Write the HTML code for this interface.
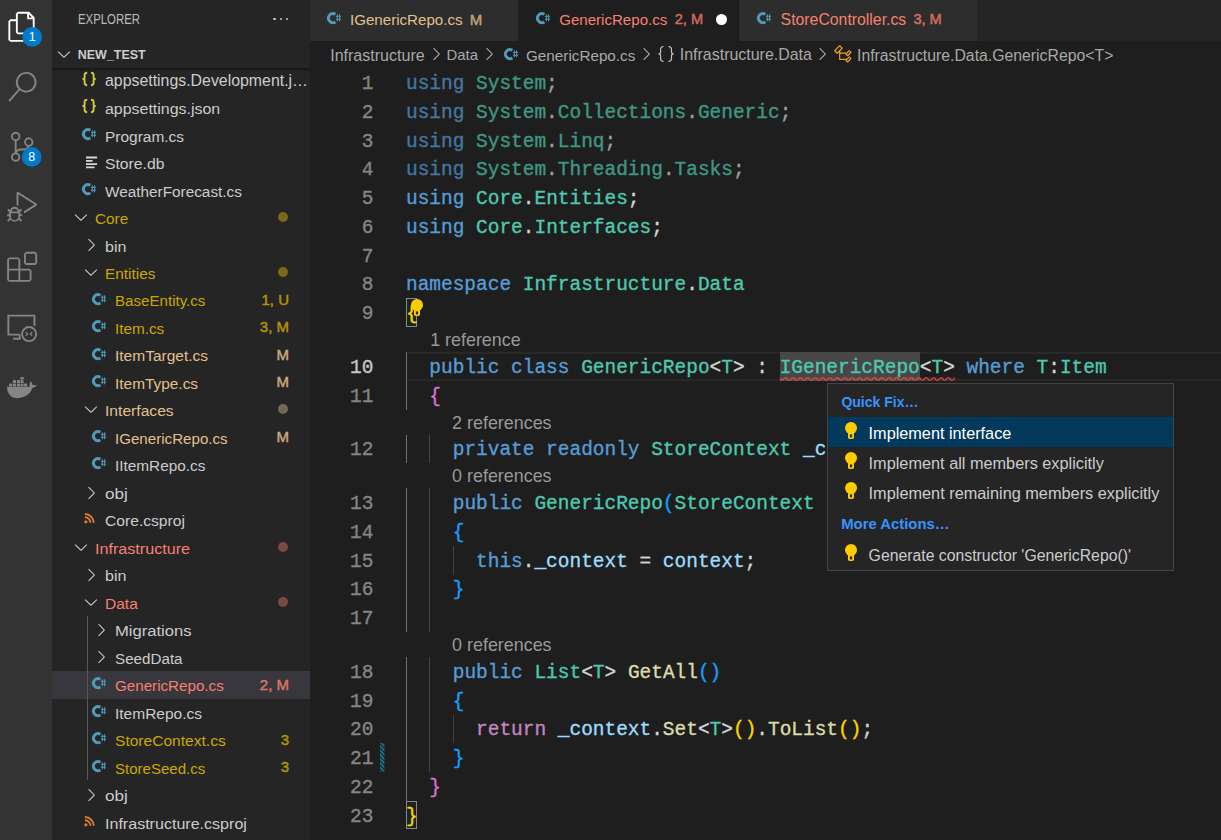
<!DOCTYPE html><html><head><meta charset="utf-8"><style>
html,body{margin:0;padding:0}
body{width:1221px;height:840px;overflow:hidden;position:relative;background:#1e1e1e;font-family:"Liberation Sans",sans-serif}
.t{position:absolute;white-space:pre;line-height:1;font-family:"Liberation Sans",sans-serif}
.c{position:absolute;white-space:pre;line-height:1;font-family:"Liberation Mono",monospace;font-size:19.47px;color:#d4d4d4;-webkit-text-stroke:0.35px currentColor}
svg{overflow:visible}
</style></head><body>
<div style="position:absolute;left:0.00px;top:0.00px;width:52.00px;height:840.00px;background:#333333;"></div>
<div style="position:absolute;left:52.00px;top:0.00px;width:258.00px;height:840.00px;background:#252526;"></div>
<div style="position:absolute;left:310.00px;top:0.00px;width:911.00px;height:41.00px;background:#252526;"></div>
<svg style="position:absolute;left:0;top:0" width="52" height="840"><path transform="translate(7.15,11.8) scale(1.25)" d="M17.5 0h-9L7 1.5V6H2.5L1 7.5v15.07L2.5 24h12.07L16 22.57V18h4.7l1.3-1.43V4.5L17.5 0zm0 2.12l2.38 2.38H17.5V2.12zm-3 20.38h-12v-15H7v9.07L8.5 18h6v4.5zm6-6h-12v-15H16V6h4.5v10.5z" fill="#ffffff"/></svg>
<svg style="position:absolute;left:0;top:0" width="52" height="840"><path transform="translate(7.15,71.9) scale(1.25)" d="M15.25 0a8.25 8.25 0 0 0-6.18 13.72L1 22.88l1.12 1 8.05-9.12A8.251 8.251 0 1 0 15.25.01V0zm0 15a6.75 6.75 0 1 1 0-13.5 6.75 6.75 0 0 1 0 13.5z" fill="#858585"/></svg>
<svg style="position:absolute;left:0;top:0" width="52" height="840"><path transform="translate(7.15,131.8) scale(1.25)" d="M21.007 8.222A3.738 3.738 0 0 0 15.045 5.2a3.737 3.737 0 0 0 1.156 6.583 2.988 2.988 0 0 1-2.668 1.67h-2.99a4.456 4.456 0 0 0-2.989 1.165V7.4a3.737 3.737 0 1 0-1.494 0v9.117a3.776 3.776 0 1 0 1.816.099 2.99 2.99 0 0 1 2.668-1.667h2.99a4.484 4.484 0 0 0 4.223-3.039 3.736 3.736 0 0 0 3.25-3.687zM4.565 3.738a2.242 2.242 0 1 1 4.484 0 2.242 2.242 0 0 1-4.484 0zm4.484 16.441a2.242 2.242 0 1 1-4.484 0 2.242 2.242 0 0 1 4.484 0zm8.221-9.715a2.242 2.242 0 1 1 0-4.485 2.242 2.242 0 0 1 0 4.485z" fill="#858585"/></svg>
<svg style="position:absolute;left:0;top:0" width="52" height="840"><path transform="translate(7.15,191.8) scale(1.25)" d="M10.94 13.5l-1.32 1.32a3.73 3.73 0 0 0-7.24 0L1.06 13.5 0 14.56l1.72 1.72-.22.22V18H0v1.5h1.5v.08c.077.489.214.966.41 1.42L0 22.94 1.06 24l1.65-1.64a4.308 4.308 0 0 0 6.58 0L10.94 24 12 22.94 10.09 21c.198-.464.336-.951.41-1.45v-.1H12V18h-1.5v-1.5l-.22-.22L12 14.56l-1.06-1.06zM6 13.5a2.25 2.25 0 0 1 2.25 2.25h-4.5A2.25 2.25 0 0 1 6 13.5zm3 6a3.33 3.33 0 0 1-3 3.25A3.33 3.33 0 0 1 3 19.5v-2.25h6v2.25zm14.76-9.9v1.26L13.5 17.37V15.6l8.5-5.37L9 2v9.46a5.07 5.07 0 0 0-1.5-.72V.63L8.64 0l15.12 9.6z" fill="#858585"/></svg>
<svg style="position:absolute;left:0;top:0" width="52" height="840"><path transform="translate(7.15,251.8) scale(1.25)" d="M13.5 1.5L15 0h7.5L24 1.5V9l-1.5 1.5H15L13.5 9V1.5zm1.5 0V9h7.5V1.5H15zM0 15V6l1.5-1.5H9L10.5 6v7.5H18l1.5 1.5v7.5L18 24H1.5L0 22.5V15zm9-1.5V6H1.5v7.5H9zM9 15H1.5v7.5H9V15zm1.5 7.5H18V15h-7.5v7.5z" fill="#858585"/></svg>
<svg style="position:absolute;left:0px;top:0px;" width="52" height="200" viewBox="0 0 52 200"><circle cx="32.2" cy="36.9" r="9.9" fill="#007acc"/><circle cx="31.7" cy="156.9" r="9.9" fill="#007acc"/></svg>
<div class="t" style="left:28.72px;top:30.82px;font-size:12.50px;color:#ffffff;">1</div>
<div class="t" style="left:28.22px;top:150.82px;font-size:12.50px;color:#ffffff;">8</div>
<svg style="position:absolute;left:0px;top:300px;" width="52" height="52" viewBox="0 0 52 52"><g fill="none" stroke="#858585" stroke-width="1.9"><path d="M19.7,34.6 H8.35 V15.65 H34.45 V26.1"/><path d="M13.1,38.7 H19.7 V34.6"/><circle cx="29.1" cy="34.1" r="7.05"/><path d="M25.8,32.2 L27.6,34 L25.8,35.8 M32.2,32.2 L30.4,34 L32.2,35.8" stroke-width="1.3"/></g></svg>
<svg style="position:absolute;left:0px;top:360px;" width="52" height="52" viewBox="0 0 52 52"><g fill="#858585"><path d="M6.9,26.7 H29.5 Q29.2,23 30.5,21 Q32.3,23.2 32.6,25 Q35,24.7 36.9,25.6 Q35.5,27.6 32.3,27.9 Q30.5,34 24,36.8 Q19,38.6 15,38 Q7.3,36.5 6.9,26.7 Z"/><rect x="9.1" y="23.6" width="3.1" height="2.8"/><rect x="12.9" y="23.6" width="3.1" height="2.8"/><rect x="16.9" y="23.6" width="3.1" height="2.8"/><rect x="20.6" y="23.6" width="2.9" height="2.8"/><rect x="24" y="23.6" width="3.1" height="2.8"/><rect x="12.9" y="20.1" width="3.1" height="2.9"/><rect x="16.9" y="20.1" width="3.1" height="2.9"/><rect x="20.6" y="20.1" width="2.9" height="2.9"/><rect x="20.4" y="17" width="3.2" height="2.6"/></g></svg>
<div class="t" style="left:77.50px;top:12.16px;font-size:14.10px;color:#bbbbbb;transform:scaleX(0.807);transform-origin:0 0;">EXPLORER</div>
<div style="position:absolute;left:273.20px;top:17.80px;width:2.60px;height:2.60px;background:#c5c5c5;border-radius:50%;"></div>
<div style="position:absolute;left:279.50px;top:17.80px;width:2.60px;height:2.60px;background:#c5c5c5;border-radius:50%;"></div>
<div style="position:absolute;left:285.80px;top:17.80px;width:2.60px;height:2.60px;background:#c5c5c5;border-radius:50%;"></div>
<svg style="position:absolute;left:54.25px;top:43.90px" width="20" height="20" viewBox="0 0 16 16"><path d="M7.976 10.072l4.357-4.357.62.618L8.284 11h-.618L3 6.333l.619-.618 4.357 4.357z" fill="#c5c5c5"/></svg>
<div class="t" style="left:77.70px;top:48.93px;font-size:12.49px;color:#cccccc;font-weight:700;">NEW_TEST</div>
<div style="position:absolute;left:52.00px;top:670.96px;width:258.00px;height:27.60px;background:#37373d;"></div>
<div style="position:absolute;left:86.60px;top:615.70px;width:1.00px;height:164.30px;background:#585858;"></div>
<svg style="position:absolute;left:82px;top:72.0px;" width="16" height="16" viewBox="0 0 16 16"><g fill="none" stroke="#cbcb41" stroke-width="1.9"><path d="M5.2,0.8 Q2.6,0.8 2.6,3.2 V5.8 Q2.6,7 0.5,7 Q2.6,7 2.6,8.2 V10.8 Q2.6,13.2 5.2,13.2"/><path d="M9,0.8 Q11.6,0.8 11.6,3.2 V5.8 Q11.6,7 13.7,7 Q11.6,7 11.6,8.2 V10.8 Q11.6,13.2 9,13.2"/></g></svg>
<div class="t" style="left:105.00px;top:73.26px;font-size:15.88px;color:#cccccc;">appsettings.Development.j…</div>
<svg style="position:absolute;left:82px;top:99.48px;" width="16" height="16" viewBox="0 0 16 16"><g fill="none" stroke="#cbcb41" stroke-width="1.9"><path d="M5.2,0.8 Q2.6,0.8 2.6,3.2 V5.8 Q2.6,7 0.5,7 Q2.6,7 2.6,8.2 V10.8 Q2.6,13.2 5.2,13.2"/><path d="M9,0.8 Q11.6,0.8 11.6,3.2 V5.8 Q11.6,7 13.7,7 Q11.6,7 11.6,8.2 V10.8 Q11.6,13.2 9,13.2"/></g></svg>
<div class="t" style="left:105.00px;top:101.10px;font-size:15.45px;color:#cccccc;transform:scaleX(1.0318);transform-origin:0 0;">appsettings.json</div>
<svg style="position:absolute;left:82.05px;top:127.66px;" width="16" height="14" viewBox="0 0 16 14"><g transform="scale(1.0)"><path d="M8.41,2.24 A4.55,4.55 0 1 0 8.41,9.96" fill="none" stroke="#519aba" stroke-width="2.9"/><path d="M10.3,2.3 V9.3 M12.6,2.3 V9.3 M8.9,4.3 H14.1 M8.9,7.2 H14.1" stroke="#519aba" stroke-width="1.0" fill="none"/></g></svg>
<div class="t" style="left:105.00px;top:128.58px;font-size:15.45px;color:#cccccc;transform:scaleX(1.0015);transform-origin:0 0;">Program.cs</div>
<svg style="position:absolute;left:86px;top:156.58px;" width="12" height="13" viewBox="0 0 12 13"><g stroke="#d4d7d6" stroke-width="1.9"><path d="M0,0.5 H11.1 M0,3.9 H6.6 M0,7.1 H11.1 M0,10.4 H8.6"/></g></svg>
<div class="t" style="left:105.00px;top:156.06px;font-size:15.45px;color:#cccccc;transform:scaleX(1.0188);transform-origin:0 0;">Store.db</div>
<svg style="position:absolute;left:82.05px;top:182.62px;" width="16" height="14" viewBox="0 0 16 14"><g transform="scale(1.0)"><path d="M8.41,2.24 A4.55,4.55 0 1 0 8.41,9.96" fill="none" stroke="#519aba" stroke-width="2.9"/><path d="M10.3,2.3 V9.3 M12.6,2.3 V9.3 M8.9,4.3 H14.1 M8.9,7.2 H14.1" stroke="#519aba" stroke-width="1.0" fill="none"/></g></svg>
<div class="t" style="left:105.00px;top:183.54px;font-size:15.45px;color:#cccccc;transform:scaleX(0.9931);transform-origin:0 0;">WeatherForecast.cs</div>
<svg style="position:absolute;left:70.55px;top:206.90px" width="20" height="20" viewBox="0 0 16 16"><path d="M7.976 10.072l4.357-4.357.62.618L8.284 11h-.618L3 6.333l.619-.618 4.357 4.357z" fill="#c5c5c5"/></svg>
<div class="t" style="left:95.00px;top:211.02px;font-size:15.45px;color:#cca700;transform:scaleX(0.9915);transform-origin:0 0;">Core</div>
<div style="position:absolute;left:278.10px;top:212.04px;width:10.00px;height:10.00px;background:#7a6819;border-radius:50%;"></div>
<svg style="position:absolute;left:80.95px;top:235.18px" width="20" height="20" viewBox="0 0 16 16"><path d="M10.072 8.024L5.715 3.667l.618-.62L11 7.716v.618L6.333 13l-.618-.619 4.357-4.357z" fill="#c5c5c5"/></svg>
<div class="t" style="left:105.00px;top:238.50px;font-size:15.45px;color:#cccccc;transform:scaleX(1.0429);transform-origin:0 0;">bin</div>
<svg style="position:absolute;left:80.55px;top:261.86px" width="20" height="20" viewBox="0 0 16 16"><path d="M7.976 10.072l4.357-4.357.62.618L8.284 11h-.618L3 6.333l.619-.618 4.357 4.357z" fill="#c5c5c5"/></svg>
<div class="t" style="left:105.00px;top:265.98px;font-size:15.45px;color:#cca700;transform:scaleX(0.9968);transform-origin:0 0;">Entities</div>
<div style="position:absolute;left:278.10px;top:267.00px;width:10.00px;height:10.00px;background:#7a6819;border-radius:50%;"></div>
<svg style="position:absolute;left:92.05px;top:292.54px;" width="16" height="14" viewBox="0 0 16 14"><g transform="scale(1.0)"><path d="M8.41,2.24 A4.55,4.55 0 1 0 8.41,9.96" fill="none" stroke="#519aba" stroke-width="2.9"/><path d="M10.3,2.3 V9.3 M12.6,2.3 V9.3 M8.9,4.3 H14.1 M8.9,7.2 H14.1" stroke="#519aba" stroke-width="1.0" fill="none"/></g></svg>
<div class="t" style="left:115.00px;top:293.46px;font-size:15.45px;color:#cca700;transform:scaleX(0.9789);transform-origin:0 0;">BaseEntity.cs</div>
<div class="t" style="left:261.49px;top:291.84px;font-size:15.00px;color:#cca700;opacity:0.85;-webkit-text-stroke:0.45px currentColor;">1, U</div>
<svg style="position:absolute;left:92.05px;top:320.02px;" width="16" height="14" viewBox="0 0 16 14"><g transform="scale(1.0)"><path d="M8.41,2.24 A4.55,4.55 0 1 0 8.41,9.96" fill="none" stroke="#519aba" stroke-width="2.9"/><path d="M10.3,2.3 V9.3 M12.6,2.3 V9.3 M8.9,4.3 H14.1 M8.9,7.2 H14.1" stroke="#519aba" stroke-width="1.0" fill="none"/></g></svg>
<div class="t" style="left:115.00px;top:320.94px;font-size:15.45px;color:#cca700;transform:scaleX(0.9902);transform-origin:0 0;">Item.cs</div>
<div class="t" style="left:259.83px;top:319.32px;font-size:15.00px;color:#cca700;opacity:0.85;-webkit-text-stroke:0.45px currentColor;">3, M</div>
<svg style="position:absolute;left:92.05px;top:347.5px;" width="16" height="14" viewBox="0 0 16 14"><g transform="scale(1.0)"><path d="M8.41,2.24 A4.55,4.55 0 1 0 8.41,9.96" fill="none" stroke="#519aba" stroke-width="2.9"/><path d="M10.3,2.3 V9.3 M12.6,2.3 V9.3 M8.9,4.3 H14.1 M8.9,7.2 H14.1" stroke="#519aba" stroke-width="1.0" fill="none"/></g></svg>
<div class="t" style="left:115.00px;top:348.42px;font-size:15.45px;color:#e2c08d;transform:scaleX(1.0041);transform-origin:0 0;">ItemTarget.cs</div>
<div class="t" style="left:276.51px;top:346.80px;font-size:15.00px;color:#e2c08d;opacity:0.85;-webkit-text-stroke:0.45px currentColor;">M</div>
<svg style="position:absolute;left:92.05px;top:374.98px;" width="16" height="14" viewBox="0 0 16 14"><g transform="scale(1.0)"><path d="M8.41,2.24 A4.55,4.55 0 1 0 8.41,9.96" fill="none" stroke="#519aba" stroke-width="2.9"/><path d="M10.3,2.3 V9.3 M12.6,2.3 V9.3 M8.9,4.3 H14.1 M8.9,7.2 H14.1" stroke="#519aba" stroke-width="1.0" fill="none"/></g></svg>
<div class="t" style="left:115.00px;top:375.90px;font-size:15.45px;color:#e2c08d;transform:scaleX(0.9978);transform-origin:0 0;">ItemType.cs</div>
<div class="t" style="left:276.51px;top:374.28px;font-size:15.00px;color:#e2c08d;opacity:0.85;-webkit-text-stroke:0.45px currentColor;">M</div>
<svg style="position:absolute;left:80.55px;top:399.26px" width="20" height="20" viewBox="0 0 16 16"><path d="M7.976 10.072l4.357-4.357.62.618L8.284 11h-.618L3 6.333l.619-.618 4.357 4.357z" fill="#c5c5c5"/></svg>
<div class="t" style="left:105.00px;top:403.38px;font-size:15.45px;color:#e2c08d;transform:scaleX(1.0127);transform-origin:0 0;">Interfaces</div>
<div style="position:absolute;left:278.10px;top:404.40px;width:10.00px;height:10.00px;background:#756850;border-radius:50%;"></div>
<svg style="position:absolute;left:92.05px;top:429.94px;" width="16" height="14" viewBox="0 0 16 14"><g transform="scale(1.0)"><path d="M8.41,2.24 A4.55,4.55 0 1 0 8.41,9.96" fill="none" stroke="#519aba" stroke-width="2.9"/><path d="M10.3,2.3 V9.3 M12.6,2.3 V9.3 M8.9,4.3 H14.1 M8.9,7.2 H14.1" stroke="#519aba" stroke-width="1.0" fill="none"/></g></svg>
<div class="t" style="left:115.00px;top:430.86px;font-size:15.45px;color:#e2c08d;transform:scaleX(0.9795);transform-origin:0 0;">IGenericRepo.cs</div>
<div class="t" style="left:276.51px;top:429.24px;font-size:15.00px;color:#e2c08d;opacity:0.85;-webkit-text-stroke:0.45px currentColor;">M</div>
<svg style="position:absolute;left:92.05px;top:457.42px;" width="16" height="14" viewBox="0 0 16 14"><g transform="scale(1.0)"><path d="M8.41,2.24 A4.55,4.55 0 1 0 8.41,9.96" fill="none" stroke="#519aba" stroke-width="2.9"/><path d="M10.3,2.3 V9.3 M12.6,2.3 V9.3 M8.9,4.3 H14.1 M8.9,7.2 H14.1" stroke="#519aba" stroke-width="1.0" fill="none"/></g></svg>
<div class="t" style="left:115.00px;top:458.34px;font-size:15.45px;color:#cccccc;transform:scaleX(0.9944);transform-origin:0 0;">IItemRepo.cs</div>
<svg style="position:absolute;left:80.95px;top:482.50px" width="20" height="20" viewBox="0 0 16 16"><path d="M10.072 8.024L5.715 3.667l.618-.62L11 7.716v.618L6.333 13l-.618-.619 4.357-4.357z" fill="#c5c5c5"/></svg>
<div class="t" style="left:105.00px;top:485.82px;font-size:15.45px;color:#cccccc;transform:scaleX(1.1108);transform-origin:0 0;">obj</div>
<svg style="position:absolute;left:83.7px;top:513.48px;" width="12" height="12" viewBox="0 0 12 12"><g fill="none" stroke="#e37933" stroke-width="1.9"><path d="M0.9,4.2 A5.6,5.6 0 0 1 6.5,9.8"/><path d="M0.9,1.0 A8.8,8.8 0 0 1 9.7,9.8"/></g><circle cx="1.9" cy="8.8" r="1.6" fill="#e37933"/></svg>
<div class="t" style="left:105.00px;top:513.30px;font-size:15.45px;color:#cccccc;transform:scaleX(1.0128);transform-origin:0 0;">Core.csproj</div>
<svg style="position:absolute;left:70.55px;top:536.66px" width="20" height="20" viewBox="0 0 16 16"><path d="M7.976 10.072l4.357-4.357.62.618L8.284 11h-.618L3 6.333l.619-.618 4.357 4.357z" fill="#c5c5c5"/></svg>
<div class="t" style="left:95.00px;top:540.78px;font-size:15.45px;color:#f88070;transform:scaleX(1.0449);transform-origin:0 0;">Infrastructure</div>
<div style="position:absolute;left:278.10px;top:541.80px;width:10.00px;height:10.00px;background:#7a4a42;border-radius:50%;"></div>
<svg style="position:absolute;left:80.95px;top:564.94px" width="20" height="20" viewBox="0 0 16 16"><path d="M10.072 8.024L5.715 3.667l.618-.62L11 7.716v.618L6.333 13l-.618-.619 4.357-4.357z" fill="#c5c5c5"/></svg>
<div class="t" style="left:105.00px;top:568.26px;font-size:15.45px;color:#cccccc;transform:scaleX(1.0429);transform-origin:0 0;">bin</div>
<svg style="position:absolute;left:80.55px;top:591.62px" width="20" height="20" viewBox="0 0 16 16"><path d="M7.976 10.072l4.357-4.357.62.618L8.284 11h-.618L3 6.333l.619-.618 4.357 4.357z" fill="#c5c5c5"/></svg>
<div class="t" style="left:105.00px;top:595.74px;font-size:15.45px;color:#f88070;transform:scaleX(1.0051);transform-origin:0 0;">Data</div>
<div style="position:absolute;left:278.10px;top:596.76px;width:10.00px;height:10.00px;background:#7a4a42;border-radius:50%;"></div>
<svg style="position:absolute;left:90.95px;top:619.90px" width="20" height="20" viewBox="0 0 16 16"><path d="M10.072 8.024L5.715 3.667l.618-.62L11 7.716v.618L6.333 13l-.618-.619 4.357-4.357z" fill="#c5c5c5"/></svg>
<div class="t" style="left:115.00px;top:623.22px;font-size:15.45px;color:#cccccc;transform:scaleX(1.0749);transform-origin:0 0;">Migrations</div>
<svg style="position:absolute;left:90.95px;top:647.38px" width="20" height="20" viewBox="0 0 16 16"><path d="M10.072 8.024L5.715 3.667l.618-.62L11 7.716v.618L6.333 13l-.618-.619 4.357-4.357z" fill="#c5c5c5"/></svg>
<div class="t" style="left:115.00px;top:650.70px;font-size:15.45px;color:#cccccc;transform:scaleX(0.9838);transform-origin:0 0;">SeedData</div>
<svg style="position:absolute;left:92.05px;top:677.26px;" width="16" height="14" viewBox="0 0 16 14"><g transform="scale(1.0)"><path d="M8.41,2.24 A4.55,4.55 0 1 0 8.41,9.96" fill="none" stroke="#519aba" stroke-width="2.9"/><path d="M10.3,2.3 V9.3 M12.6,2.3 V9.3 M8.9,4.3 H14.1 M8.9,7.2 H14.1" stroke="#519aba" stroke-width="1.0" fill="none"/></g></svg>
<div class="t" style="left:115.00px;top:678.18px;font-size:15.45px;color:#f88070;transform:scaleX(0.9822);transform-origin:0 0;">GenericRepo.cs</div>
<div class="t" style="left:259.83px;top:676.56px;font-size:15.00px;color:#f88070;opacity:0.85;-webkit-text-stroke:0.45px currentColor;">2, M</div>
<svg style="position:absolute;left:92.05px;top:704.74px;" width="16" height="14" viewBox="0 0 16 14"><g transform="scale(1.0)"><path d="M8.41,2.24 A4.55,4.55 0 1 0 8.41,9.96" fill="none" stroke="#519aba" stroke-width="2.9"/><path d="M10.3,2.3 V9.3 M12.6,2.3 V9.3 M8.9,4.3 H14.1 M8.9,7.2 H14.1" stroke="#519aba" stroke-width="1.0" fill="none"/></g></svg>
<div class="t" style="left:115.00px;top:705.66px;font-size:15.45px;color:#cccccc;transform:scaleX(1.0044);transform-origin:0 0;">ItemRepo.cs</div>
<svg style="position:absolute;left:92.05px;top:732.22px;" width="16" height="14" viewBox="0 0 16 14"><g transform="scale(1.0)"><path d="M8.41,2.24 A4.55,4.55 0 1 0 8.41,9.96" fill="none" stroke="#519aba" stroke-width="2.9"/><path d="M10.3,2.3 V9.3 M12.6,2.3 V9.3 M8.9,4.3 H14.1 M8.9,7.2 H14.1" stroke="#519aba" stroke-width="1.0" fill="none"/></g></svg>
<div class="t" style="left:115.00px;top:733.14px;font-size:15.45px;color:#cca700;transform:scaleX(1.0081);transform-origin:0 0;">StoreContext.cs</div>
<div class="t" style="left:280.66px;top:731.52px;font-size:15.00px;color:#cca700;opacity:0.85;-webkit-text-stroke:0.45px currentColor;">3</div>
<svg style="position:absolute;left:92.05px;top:759.7px;" width="16" height="14" viewBox="0 0 16 14"><g transform="scale(1.0)"><path d="M8.41,2.24 A4.55,4.55 0 1 0 8.41,9.96" fill="none" stroke="#519aba" stroke-width="2.9"/><path d="M10.3,2.3 V9.3 M12.6,2.3 V9.3 M8.9,4.3 H14.1 M8.9,7.2 H14.1" stroke="#519aba" stroke-width="1.0" fill="none"/></g></svg>
<div class="t" style="left:115.00px;top:760.62px;font-size:15.45px;color:#cca700;transform:scaleX(0.9736);transform-origin:0 0;">StoreSeed.cs</div>
<div class="t" style="left:280.66px;top:759.00px;font-size:15.00px;color:#cca700;opacity:0.85;-webkit-text-stroke:0.45px currentColor;">3</div>
<svg style="position:absolute;left:80.95px;top:784.78px" width="20" height="20" viewBox="0 0 16 16"><path d="M10.072 8.024L5.715 3.667l.618-.62L11 7.716v.618L6.333 13l-.618-.619 4.357-4.357z" fill="#c5c5c5"/></svg>
<div class="t" style="left:105.00px;top:788.10px;font-size:15.45px;color:#cccccc;transform:scaleX(1.1108);transform-origin:0 0;">obj</div>
<svg style="position:absolute;left:83.7px;top:815.76px;" width="12" height="12" viewBox="0 0 12 12"><g fill="none" stroke="#e37933" stroke-width="1.9"><path d="M0.9,4.2 A5.6,5.6 0 0 1 6.5,9.8"/><path d="M0.9,1.0 A8.8,8.8 0 0 1 9.7,9.8"/></g><circle cx="1.9" cy="8.8" r="1.6" fill="#e37933"/></svg>
<div class="t" style="left:105.00px;top:815.58px;font-size:15.45px;color:#cccccc;transform:scaleX(1.0402);transform-origin:0 0;">Infrastructure.csproj</div>
<div style="position:absolute;left:52.00px;top:67.60px;width:258.00px;height:4.00px;background:linear-gradient(rgba(0,0,0,0.42),rgba(0,0,0,0));"></div>
<div style="position:absolute;left:310.00px;top:0.00px;width:208.00px;height:41.00px;background:#2d2d2d;"></div>
<div style="position:absolute;left:518.00px;top:0.00px;width:221.00px;height:41.00px;background:#1e1e1e;"></div>
<div style="position:absolute;left:739.00px;top:0.00px;width:238.00px;height:41.00px;background:#2d2d2d;"></div>
<svg style="position:absolute;left:326.9px;top:11.9px;" width="16" height="14" viewBox="0 0 16 14"><g transform="scale(1.0)"><path d="M8.41,2.24 A4.55,4.55 0 1 0 8.41,9.96" fill="none" stroke="#519aba" stroke-width="2.9"/><path d="M10.3,2.3 V9.3 M12.6,2.3 V9.3 M8.9,4.3 H14.1 M8.9,7.2 H14.1" stroke="#519aba" stroke-width="1.0" fill="none"/></g></svg>
<div class="t" style="left:350.00px;top:12.31px;font-size:15.11px;color:#e2c08d;">IGenericRepo.cs</div>
<div class="t" style="left:469.80px;top:11.70px;font-size:15.00px;color:#e2c08d;opacity:0.8;-webkit-text-stroke:0.45px currentColor;">M</div>
<svg style="position:absolute;left:536.1px;top:11.9px;" width="16" height="14" viewBox="0 0 16 14"><g transform="scale(1.0)"><path d="M8.41,2.24 A4.55,4.55 0 1 0 8.41,9.96" fill="none" stroke="#519aba" stroke-width="2.9"/><path d="M10.3,2.3 V9.3 M12.6,2.3 V9.3 M8.9,4.3 H14.1 M8.9,7.2 H14.1" stroke="#519aba" stroke-width="1.0" fill="none"/></g></svg>
<div class="t" style="left:559.20px;top:12.32px;font-size:15.09px;color:#f88070;">GenericRepo.cs</div>
<div class="t" style="left:674.70px;top:12.04px;font-size:14.60px;color:#f88070;opacity:0.8;-webkit-text-stroke:0.45px currentColor;">2, M</div>
<div style="position:absolute;left:716.00px;top:13.80px;width:11.00px;height:11.00px;background:#ffffff;border-radius:50%;"></div>
<svg style="position:absolute;left:756.9px;top:11.9px;" width="16" height="14" viewBox="0 0 16 14"><g transform="scale(1.0)"><path d="M8.41,2.24 A4.55,4.55 0 1 0 8.41,9.96" fill="none" stroke="#519aba" stroke-width="2.9"/><path d="M10.3,2.3 V9.3 M12.6,2.3 V9.3 M8.9,4.3 H14.1 M8.9,7.2 H14.1" stroke="#519aba" stroke-width="1.0" fill="none"/></g></svg>
<div class="t" style="left:780.60px;top:11.71px;font-size:15.82px;color:#f88070;">StoreController.cs</div>
<div class="t" style="left:913.40px;top:12.04px;font-size:14.60px;color:#f88070;opacity:0.8;-webkit-text-stroke:0.45px currentColor;">3, M</div>
<div class="t" style="left:330.20px;top:47.41px;font-size:16.06px;color:#a9a9a9;">Infrastructure</div>
<svg style="position:absolute;left:425.90px;top:44.10px" width="20" height="20" viewBox="0 0 16 16"><path d="M10.072 8.024L5.715 3.667l.618-.62L11 7.716v.618L6.333 13l-.618-.619 4.357-4.357z" fill="#a9a9a9"/></svg>
<div class="t" style="left:446.50px;top:48.38px;font-size:14.91px;color:#a9a9a9;">Data</div>
<svg style="position:absolute;left:479.20px;top:44.10px" width="20" height="20" viewBox="0 0 16 16"><path d="M10.072 8.024L5.715 3.667l.618-.62L11 7.716v.618L6.333 13l-.618-.619 4.357-4.357z" fill="#a9a9a9"/></svg>
<svg style="position:absolute;left:504.2px;top:48.1px;" width="16" height="14" viewBox="0 0 16 14"><g transform="scale(1.0)"><path d="M8.41,2.24 A4.55,4.55 0 1 0 8.41,9.96" fill="none" stroke="#519aba" stroke-width="2.9"/><path d="M10.3,2.3 V9.3 M12.6,2.3 V9.3 M8.9,4.3 H14.1 M8.9,7.2 H14.1" stroke="#519aba" stroke-width="1.0" fill="none"/></g></svg>
<div class="t" style="left:526.00px;top:48.10px;font-size:15.25px;color:#a9a9a9;">GenericRepo.cs</div>
<svg style="position:absolute;left:635.60px;top:44.10px" width="20" height="20" viewBox="0 0 16 16"><path d="M10.072 8.024L5.715 3.667l.618-.62L11 7.716v.618L6.333 13l-.618-.619 4.357-4.357z" fill="#a9a9a9"/></svg>
<svg style="position:absolute;left:650px;top:40px;" width="30" height="30" viewBox="0 0 30 30"><g fill="none" stroke="#c5c5c5" stroke-width="1.15"><path d="M13.6,6.5 Q10.6,6.5 10.6,9.6 V11.9 Q10.6,13.9 8.5,13.9 Q10.6,13.9 10.6,15.9 V18.6 Q10.6,21.5 13.6,21.5"/><path d="M18.5,6.5 Q21.5,6.5 21.5,9.6 V11.9 Q21.5,13.9 23.6,13.9 Q21.5,13.9 21.5,15.9 V18.6 Q21.5,21.5 18.5,21.5"/></g></svg>
<div class="t" style="left:679.80px;top:47.49px;font-size:15.96px;color:#a9a9a9;">Infrastructure.Data</div>
<svg style="position:absolute;left:812.10px;top:44.10px" width="20" height="20" viewBox="0 0 16 16"><path d="M10.072 8.024L5.715 3.667l.618-.62L11 7.716v.618L6.333 13l-.618-.619 4.357-4.357z" fill="#a9a9a9"/></svg>
<svg style="position:absolute;left:832.75px;top:43.75px" width="20" height="20" viewBox="0 0 16 16"><path fill="#ee9d28" d="M11.34 9.71h.71l2.67-2.67v-.71L13.38 5h-.7l-1.82 1.81h-5V5.56l1.86-1.85V3l-2-2H5L1 5v.71l2 2h.71l1.14-1.15v5.79l.5.5H10v.52l1.33 1.34h.71l2.67-2.67v-.71L13.37 10h-.7l-1.86 1.85h-5v-4H10v.48l1.34 1.38zm1.69-3.65l.63.63-2 2-.63-.63 2-2zm0 5l.63.63-2 2-.63-.63 2-2zM3.35 6.65l-1.29-1.3 3.29-3.29 1.3 1.29-3.3 3.3z"/></svg>
<div class="t" style="left:857.00px;top:47.62px;font-size:15.80px;color:#a9a9a9;">Infrastructure.Data.GenericRepo&lt;T&gt;</div>
<div style="position:absolute;left:406.00px;top:352.05px;width:815.00px;height:2.00px;background:#282828;"></div>
<div style="position:absolute;left:406.00px;top:378.80px;width:815.00px;height:2.00px;background:#282828;"></div>
<div style="position:absolute;left:406.10px;top:352.05px;width:1.00px;height:28.75px;background:#707070;"></div>
<div style="position:absolute;left:406.10px;top:380.80px;width:1.00px;height:28.75px;background:#707070;"></div>
<div style="position:absolute;left:406.10px;top:434.55px;width:1.00px;height:28.75px;background:#707070;"></div>
<div style="position:absolute;left:406.10px;top:488.30px;width:1.00px;height:28.75px;background:#707070;"></div>
<div style="position:absolute;left:406.10px;top:517.05px;width:1.00px;height:28.75px;background:#707070;"></div>
<div style="position:absolute;left:406.10px;top:545.80px;width:1.00px;height:28.75px;background:#707070;"></div>
<div style="position:absolute;left:406.10px;top:574.55px;width:1.00px;height:28.75px;background:#707070;"></div>
<div style="position:absolute;left:406.10px;top:603.30px;width:1.00px;height:28.75px;background:#707070;"></div>
<div style="position:absolute;left:406.10px;top:657.05px;width:1.00px;height:28.75px;background:#707070;"></div>
<div style="position:absolute;left:406.10px;top:685.80px;width:1.00px;height:28.75px;background:#707070;"></div>
<div style="position:absolute;left:406.10px;top:714.55px;width:1.00px;height:28.75px;background:#707070;"></div>
<div style="position:absolute;left:406.10px;top:743.30px;width:1.00px;height:28.75px;background:#707070;"></div>
<div style="position:absolute;left:406.10px;top:772.05px;width:1.00px;height:28.75px;background:#707070;"></div>
<div style="position:absolute;left:429.46px;top:434.55px;width:1.00px;height:28.75px;background:#444444;"></div>
<div style="position:absolute;left:429.46px;top:488.30px;width:1.00px;height:28.75px;background:#444444;"></div>
<div style="position:absolute;left:429.46px;top:517.05px;width:1.00px;height:28.75px;background:#444444;"></div>
<div style="position:absolute;left:429.46px;top:545.80px;width:1.00px;height:28.75px;background:#444444;"></div>
<div style="position:absolute;left:429.46px;top:574.55px;width:1.00px;height:28.75px;background:#444444;"></div>
<div style="position:absolute;left:429.46px;top:603.30px;width:1.00px;height:28.75px;background:#444444;"></div>
<div style="position:absolute;left:429.46px;top:657.05px;width:1.00px;height:28.75px;background:#444444;"></div>
<div style="position:absolute;left:429.46px;top:685.80px;width:1.00px;height:28.75px;background:#444444;"></div>
<div style="position:absolute;left:429.46px;top:714.55px;width:1.00px;height:28.75px;background:#444444;"></div>
<div style="position:absolute;left:429.46px;top:743.30px;width:1.00px;height:28.75px;background:#444444;"></div>
<div style="position:absolute;left:452.82px;top:545.80px;width:1.00px;height:28.75px;background:#404040;"></div>
<div style="position:absolute;left:452.82px;top:714.55px;width:1.00px;height:28.75px;background:#404040;"></div>
<div style="position:absolute;left:406.00px;top:298.30px;width:10.78px;height:28.55px;background:#1b251b;box-sizing:border-box;border:1px solid #888888;"></div>
<div style="position:absolute;left:406.00px;top:800.80px;width:10.78px;height:28.55px;background:#1b251b;box-sizing:border-box;border:1px solid #888888;"></div>
<div style="position:absolute;left:779.76px;top:352.05px;width:140.16px;height:28.95px;background:#474747;"></div>
<svg style="position:absolute;left:380px;top:743.3px;" width="5" height="29" viewBox="0 0 5 29"><defs><pattern id="dd" width="3" height="3" patternUnits="userSpaceOnUse" patternTransform="rotate(-45)"><rect width="1.6" height="3" fill="#1b81a8"/></pattern></defs><rect x="0" y="0" width="4.4" height="28.8" fill="url(#dd)"/></svg>
<div class="c" style="left:361.72px;top:75.13px;color:#858585">1</div>
<div class="c" style="left:406.00px;top:75.13px;opacity:0.7;"><span style="color:#569cd6">using</span><span style="color:#d4d4d4"> </span><span style="color:#4ec9b0">System</span><span style="color:#d4d4d4">;</span></div>
<div class="c" style="left:361.72px;top:103.88px;color:#858585">2</div>
<div class="c" style="left:406.00px;top:103.88px;opacity:0.7;"><span style="color:#569cd6">using</span><span style="color:#d4d4d4"> </span><span style="color:#4ec9b0">System</span><span style="color:#d4d4d4">.</span><span style="color:#4ec9b0">Collections</span><span style="color:#d4d4d4">.</span><span style="color:#4ec9b0">Generic</span><span style="color:#d4d4d4">;</span></div>
<div class="c" style="left:361.72px;top:132.63px;color:#858585">3</div>
<div class="c" style="left:406.00px;top:132.63px;opacity:0.7;"><span style="color:#569cd6">using</span><span style="color:#d4d4d4"> </span><span style="color:#4ec9b0">System</span><span style="color:#d4d4d4">.</span><span style="color:#4ec9b0">Linq</span><span style="color:#d4d4d4">;</span></div>
<div class="c" style="left:361.72px;top:161.38px;color:#858585">4</div>
<div class="c" style="left:406.00px;top:161.38px;opacity:0.7;"><span style="color:#569cd6">using</span><span style="color:#d4d4d4"> </span><span style="color:#4ec9b0">System</span><span style="color:#d4d4d4">.</span><span style="color:#4ec9b0">Threading</span><span style="color:#d4d4d4">.</span><span style="color:#4ec9b0">Tasks</span><span style="color:#d4d4d4">;</span></div>
<div class="c" style="left:361.72px;top:190.13px;color:#858585">5</div>
<div class="c" style="left:406.00px;top:190.13px;"><span style="color:#569cd6">using</span><span style="color:#d4d4d4"> </span><span style="color:#4ec9b0">Core</span><span style="color:#d4d4d4">.</span><span style="color:#4ec9b0">Entities</span><span style="color:#d4d4d4">;</span></div>
<div class="c" style="left:361.72px;top:218.88px;color:#858585">6</div>
<div class="c" style="left:406.00px;top:218.88px;"><span style="color:#569cd6">using</span><span style="color:#d4d4d4"> </span><span style="color:#4ec9b0">Core</span><span style="color:#d4d4d4">.</span><span style="color:#4ec9b0">Interfaces</span><span style="color:#d4d4d4">;</span></div>
<div class="c" style="left:361.72px;top:247.63px;color:#858585">7</div>
<div class="c" style="left:361.72px;top:276.38px;color:#858585">8</div>
<div class="c" style="left:406.00px;top:276.38px;"><span style="color:#569cd6">namespace</span><span style="color:#d4d4d4"> </span><span style="color:#4ec9b0">Infrastructure</span><span style="color:#d4d4d4">.</span><span style="color:#4ec9b0">Data</span></div>
<div class="c" style="left:361.72px;top:305.13px;color:#858585">9</div>
<div class="c" style="left:406.00px;top:305.13px;"><span style="color:#ffd700">{</span></div>
<div class="t" style="left:430.16px;top:332.20px;font-size:17.90px;color:#999999;">1 reference</div>
<div class="c" style="left:350.04px;top:358.88px;color:#c6c6c6">10</div>
<div class="c" style="left:406.00px;top:358.88px;"><span style="color:#d4d4d4">  </span><span style="color:#569cd6">public</span><span style="color:#d4d4d4"> </span><span style="color:#569cd6">class</span><span style="color:#d4d4d4"> </span><span style="color:#4ec9b0">GenericRepo</span><span style="color:#d4d4d4">&lt;</span><span style="color:#4ec9b0">T</span><span style="color:#d4d4d4">&gt; : </span><span style="color:#4ec9b0">IGenericRepo</span><span style="color:#d4d4d4">&lt;</span><span style="color:#4ec9b0">T</span><span style="color:#d4d4d4">&gt; </span><span style="color:#569cd6">where</span><span style="color:#d4d4d4"> </span><span style="color:#4ec9b0">T</span><span style="color:#d4d4d4">:</span><span style="color:#4ec9b0">Item</span></div>
<div class="c" style="left:350.04px;top:387.63px;color:#858585">11</div>
<div class="c" style="left:406.00px;top:387.63px;"><span style="color:#d4d4d4">  </span><span style="color:#da70d6">{</span></div>
<div class="t" style="left:452.12px;top:414.70px;font-size:17.90px;color:#999999;">2 references</div>
<div class="c" style="left:350.04px;top:441.38px;color:#858585">12</div>
<div class="c" style="left:406.00px;top:441.38px;"><span style="color:#d4d4d4">    </span><span style="color:#569cd6">private</span><span style="color:#d4d4d4"> </span><span style="color:#569cd6">readonly</span><span style="color:#d4d4d4"> </span><span style="color:#4ec9b0">StoreContext</span><span style="color:#d4d4d4"> </span><span style="color:#9cdcfe">_context</span><span style="color:#d4d4d4">;</span></div>
<div class="t" style="left:452.12px;top:468.45px;font-size:17.90px;color:#999999;">0 references</div>
<div class="c" style="left:350.04px;top:495.13px;color:#858585">13</div>
<div class="c" style="left:406.00px;top:495.13px;"><span style="color:#d4d4d4">    </span><span style="color:#569cd6">public</span><span style="color:#d4d4d4"> </span><span style="color:#4ec9b0">GenericRepo</span><span style="color:#179fff">(</span><span style="color:#4ec9b0">StoreContext</span></div>
<div class="c" style="left:350.04px;top:523.88px;color:#858585">14</div>
<div class="c" style="left:406.00px;top:523.88px;"><span style="color:#d4d4d4">    </span><span style="color:#179fff">{</span></div>
<div class="c" style="left:350.04px;top:552.63px;color:#858585">15</div>
<div class="c" style="left:406.00px;top:552.63px;"><span style="color:#d4d4d4">      </span><span style="color:#569cd6">this</span><span style="color:#d4d4d4">.</span><span style="color:#9cdcfe">_context</span><span style="color:#d4d4d4"> = </span><span style="color:#9cdcfe">context</span><span style="color:#d4d4d4">;</span></div>
<div class="c" style="left:350.04px;top:581.38px;color:#858585">16</div>
<div class="c" style="left:406.00px;top:581.38px;"><span style="color:#d4d4d4">    </span><span style="color:#179fff">}</span></div>
<div class="c" style="left:350.04px;top:610.13px;color:#858585">17</div>
<div class="t" style="left:452.12px;top:637.20px;font-size:17.90px;color:#999999;">0 references</div>
<div class="c" style="left:350.04px;top:663.88px;color:#858585">18</div>
<div class="c" style="left:406.00px;top:663.88px;"><span style="color:#d4d4d4">    </span><span style="color:#569cd6">public</span><span style="color:#d4d4d4"> </span><span style="color:#4ec9b0">List</span><span style="color:#d4d4d4">&lt;</span><span style="color:#4ec9b0">T</span><span style="color:#d4d4d4">&gt; </span><span style="color:#dcdcaa">GetAll</span><span style="color:#179fff">()</span></div>
<div class="c" style="left:350.04px;top:692.63px;color:#858585">19</div>
<div class="c" style="left:406.00px;top:692.63px;"><span style="color:#d4d4d4">    </span><span style="color:#179fff">{</span></div>
<div class="c" style="left:350.04px;top:721.38px;color:#858585">20</div>
<div class="c" style="left:406.00px;top:721.38px;"><span style="color:#d4d4d4">      </span><span style="color:#c586c0">return</span><span style="color:#d4d4d4"> </span><span style="color:#9cdcfe">_context</span><span style="color:#d4d4d4">.</span><span style="color:#dcdcaa">Set</span><span style="color:#d4d4d4">&lt;</span><span style="color:#4ec9b0">T</span><span style="color:#d4d4d4">&gt;</span><span style="color:#ffd700">()</span><span style="color:#d4d4d4">.</span><span style="color:#dcdcaa">ToList</span><span style="color:#ffd700">()</span><span style="color:#d4d4d4">;</span></div>
<div class="c" style="left:350.04px;top:750.13px;color:#858585">21</div>
<div class="c" style="left:406.00px;top:750.13px;"><span style="color:#d4d4d4">    </span><span style="color:#179fff">}</span></div>
<div class="c" style="left:350.04px;top:778.88px;color:#858585">22</div>
<div class="c" style="left:406.00px;top:778.88px;"><span style="color:#d4d4d4">  </span><span style="color:#da70d6">}</span></div>
<div class="c" style="left:350.04px;top:807.63px;color:#858585">23</div>
<div class="c" style="left:406.00px;top:807.63px;"><span style="color:#ffd700">}</span></div>
<svg style="position:absolute;left:0;top:0" width="1221" height="840"><defs><pattern id="sq" x="779.76" y="377.20" width="7.4" height="3.6" patternUnits="userSpaceOnUse"><g transform="scale(1.2333,1.2)" fill="#f14c4c"><polygon points="5.5,0 2.5,3 1.1,3 4.1,0"/><polygon points="4,0 6,2 6,0.6 5.4,0"/><polygon points="0,2 1,3 2.4,3 0,0.6"/></g></pattern></defs><rect x="779.76" y="377.20" width="175.20" height="3.6" fill="url(#sq)"/></svg>
<svg style="position:absolute;left:408.95px;top:296.70px" width="16" height="22"><circle cx="8" cy="8" r="6" fill="#ffcc00"/><rect x="5" y="10.5" width="6" height="8.4" rx="1.6" fill="#ffcc00"/><rect x="6.9" y="14.4" width="2.2" height="3" fill="#1b251b"/></svg>
<div style="position:absolute;left:827.2px;top:383.4px;width:346.4px;height:187.4px;background:#252526;box-sizing:border-box;border:1px solid #454545"></div>
<div style="position:absolute;left:828.00px;top:417.00px;width:345.00px;height:29.80px;background:#04395e;"></div>
<div class="t" style="left:841.40px;top:394.84px;font-size:14.02px;color:#3794ff;font-weight:700;">Quick Fix…</div>
<div class="t" style="left:868.60px;top:425.34px;font-size:16.25px;color:#ffffff;">Implement interface</div>
<svg style="position:absolute;left:843.00px;top:420.30px" width="16" height="22"><circle cx="8" cy="8" r="6" fill="#ffcc00"/><rect x="5" y="10.5" width="6" height="8.4" rx="1.6" fill="#ffcc00"/><rect x="6.9" y="14.4" width="2.2" height="3" fill="#04395e"/></svg>
<div class="t" style="left:868.60px;top:455.00px;font-size:16.30px;color:#cccccc;">Implement all members explicitly</div>
<svg style="position:absolute;left:843.00px;top:450.00px" width="16" height="22"><circle cx="8" cy="8" r="6" fill="#ffcc00"/><rect x="5" y="10.5" width="6" height="8.4" rx="1.6" fill="#ffcc00"/><rect x="6.9" y="14.4" width="2.2" height="3" fill="#252526"/></svg>
<div class="t" style="left:868.60px;top:485.39px;font-size:16.31px;color:#cccccc;">Implement remaining members explicitly</div>
<svg style="position:absolute;left:843.00px;top:480.40px" width="16" height="22"><circle cx="8" cy="8" r="6" fill="#ffcc00"/><rect x="5" y="10.5" width="6" height="8.4" rx="1.6" fill="#ffcc00"/><rect x="6.9" y="14.4" width="2.2" height="3" fill="#252526"/></svg>
<div class="t" style="left:868.60px;top:547.63px;font-size:15.80px;color:#cccccc;">Generate constructor &#x27;GenericRepo()&#x27;</div>
<svg style="position:absolute;left:843.00px;top:542.20px" width="16" height="22"><circle cx="8" cy="8" r="6" fill="#ffcc00"/><rect x="5" y="10.5" width="6" height="8.4" rx="1.6" fill="#ffcc00"/><rect x="6.9" y="14.4" width="2.2" height="3" fill="#252526"/></svg>
<div class="t" style="left:841.20px;top:516.91px;font-size:14.87px;color:#3794ff;font-weight:700;">More Actions…</div>
</body></html>
